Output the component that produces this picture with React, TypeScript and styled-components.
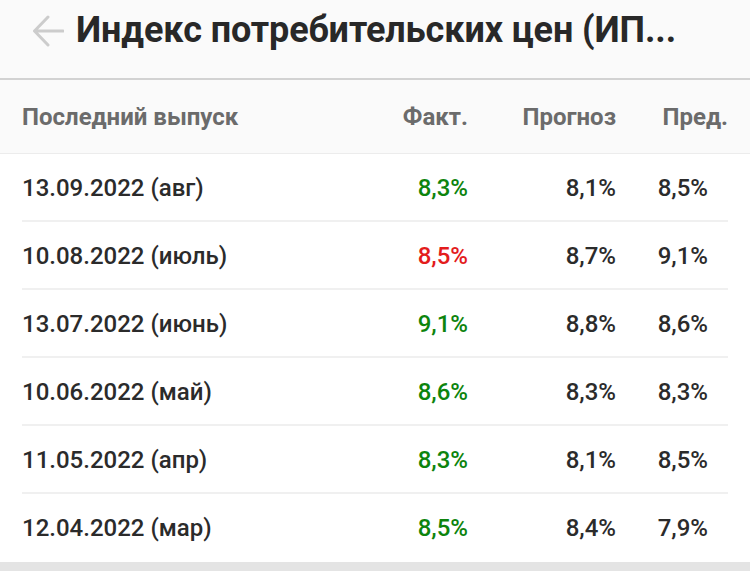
import styled, { createGlobalStyle } from "styled-components"

const GlobalStyle = createGlobalStyle`
  html, body {
    margin: 0;
    padding: 0;
    background: #e4e4e4;
  }
  body {
    font-family: Roboto, "Noto Sans", sans-serif;
  }
`

type Tone = "up" | "down"

const rows: { date: string; fact: string; tone: Tone; forecast: string; prev: string }[] = [
    { date: "13.09.2022 (авг)", fact: "8,3%", tone: "up", forecast: "8,1%", prev: "8,5%" },
    { date: "10.08.2022 (июль)", fact: "8,5%", tone: "down", forecast: "8,7%", prev: "9,1%" },
    { date: "13.07.2022 (июнь)", fact: "9,1%", tone: "up", forecast: "8,8%", prev: "8,6%" },
    { date: "10.06.2022 (май)", fact: "8,6%", tone: "up", forecast: "8,3%", prev: "8,3%" },
    { date: "11.05.2022 (апр)", fact: "8,3%", tone: "up", forecast: "8,1%", prev: "8,5%" },
    { date: "12.04.2022 (мар)", fact: "8,5%", tone: "up", forecast: "8,4%", prev: "7,9%" },
]

export default function App() {
    return (
        <Page>
            <GlobalStyle />
            <TopBar>
                <BackButton aria-label="Назад">
                    <svg width="32" height="32" viewBox="0 0 32 32" fill="none">
                        <path d="M31 16H3M16 2L2.5 16L16 30" stroke="#cccccc" strokeWidth="3" strokeLinecap="round" strokeLinejoin="round" />
                    </svg>
                </BackButton>
                <Title>Индекс потребительских цен (ИП...</Title>
            </TopBar>
            <Table>
                <HeadRow>
                    <HeadCell>Последний выпуск</HeadCell>
                    <HeadCell $align="right">Факт.</HeadCell>
                    <HeadCell $align="right">Прогноз</HeadCell>
                    <HeadCell $align="right">Пред.</HeadCell>
                </HeadRow>
                {rows.map((r) => (
                    <Row key={r.date}>
                        <Cell>{r.date}</Cell>
                        <Cell $align="right" $tone={r.tone}>{r.fact}</Cell>
                        <Cell $align="right">{r.forecast}</Cell>
                        <Cell $align="right" $pad={20}>{r.prev}</Cell>
                    </Row>
                ))}
            </Table>
        </Page>
    )
}

const Page = styled.div`
    width: 750px;
    height: 562px;
    background: #ffffff;
`

const TopBar = styled.header`
    height: 61px;
    display: flex;
    align-items: center;
    gap: 10px;
    padding: 0 0 17px 32px;
    background: #fafafa;
    border-bottom: 2px solid #d2d2d2;
    box-sizing: content-box;
`

const BackButton = styled.button`
    border: none;
    background: none;
    padding: 0;
    width: 34px;
    height: 34px;
    display: flex;
    align-items: center;
    justify-content: flex-start;
`

const Title = styled.h1`
    margin: 0 0 2px;
    font-size: 36px;
    line-height: 36px;
    font-weight: 700;
    color: #282828;
    letter-spacing: -0.1px;
    white-space: nowrap;
`

const grid = `
    display: grid;
    grid-template-columns: 1fr 140px 148px 112px;
    align-items: center;
    padding: 0 22px;
`

const Table = styled.div`
    display: flex;
    flex-direction: column;
`

const HeadRow = styled.div`
    ${grid}
    height: 73px;
    background: #fafafa;
    border-bottom: 1px solid #ececec;
`

const HeadCell = styled.div<{ $align?: "right" }>`
    font-size: 24px;
    font-weight: 700;
    color: #6b6b6b;
    text-align: ${(p) => p.$align ?? "left"};
`

const Row = styled.div`
    ${grid}
    height: 68px;
    box-sizing: border-box;
    position: relative;
    &:not(:last-child)::after {
        content: "";
        position: absolute;
        left: 22px;
        right: 22px;
        bottom: 0;
        height: 2px;
        background: #f0f0f0;
    }
`

const Cell = styled.div<{ $align?: "right"; $tone?: Tone; $pad?: number }>`
    font-size: 24px;
    font-weight: 500;
    color: ${(p) => (p.$tone === "up" ? "#0d840d" : p.$tone === "down" ? "#e31c1c" : "#2b2b2b")};
    text-align: ${(p) => p.$align ?? "left"};
    padding-right: ${(p) => p.$pad ?? 0}px;
`
